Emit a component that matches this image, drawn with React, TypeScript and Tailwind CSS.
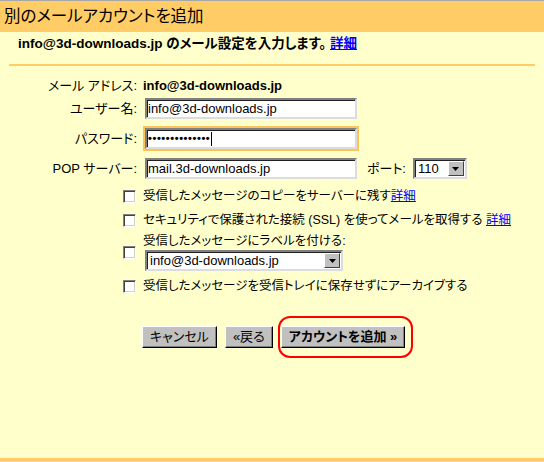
import React from 'react';

const font = "font-['Liberation_Sans','Noto_Sans_CJK_JP',sans-serif] [font-feature-settings:'palt']";

function Field({ children, className = '' }: { children: React.ReactNode; className?: string }) {
  return (
    <div
      className={`ml-[2px] w-[212px] h-[21px] bg-white border-2 border-t-[#808080] border-l-[#808080] border-b-[#dcdcdc] border-r-[#dcdcdc] shadow-[inset_1px_1px_0_#202020] flex items-center pl-[1px] text-[13px] text-black ${className}`}
    >
      {children}
    </div>
  );
}

function Select({ value, width }: { value: string; width: string }) {
  return (
    <div
      className={`${width} h-[21px] bg-white border-2 border-t-[#808080] border-l-[#808080] border-b-[#dcdcdc] border-r-[#dcdcdc] shadow-[inset_1px_1px_0_#202020] flex items-stretch text-[13px]`}
    >
      <div className="flex-1 flex items-center pl-[3px] pt-[1px]">{value}</div>
      <div className="w-[16px] my-[1px] mr-[1px] bg-[#c0c0c0] border border-t-white border-l-white border-b-[#404040] border-r-[#404040] flex items-center justify-center">
        <svg width="7" height="4" viewBox="0 0 7 4">
          <path d="M0 0h7L3.5 4z" fill="#000" />
        </svg>
      </div>
    </div>
  );
}

function Checkbox() {
  return (
    <span className="w-[13px] h-[13px] shrink-0 bg-white border border-t-[#808080] border-l-[#808080] border-b-white border-r-white shadow-[inset_1px_1px_0_#404040,inset_-1px_-1px_0_#d4d0c8]" />
  );
}

function Button({ children, bold = false }: { children: React.ReactNode; bold?: boolean }) {
  return (
    <div
      className={`h-[22px] bg-[#c0c0c0] border border-t-white border-l-white border-b-black border-r-black shadow-[inset_-1px_-1px_0_#808080] flex items-center px-[7px] text-[13px] text-black ${bold ? 'font-bold' : ''}`}
    >
      {children}
    </div>
  );
}

export default function App() {
  return (
    <div className={`w-[544px] h-[462px] bg-[#ffffcc] flex flex-col border-t border-[#a8a8a8] text-black ${font}`}>
      {/* Header */}
      <div className="h-[31px] shrink-0 bg-[#ffcc66] flex items-center px-[4px] text-[16.5px]">別のメールアカウントを追加</div>

      {/* Subtitle */}
      <div className="mx-[9px] h-[34px] border-b-2 border-[#ffcc66] pl-[9px] pt-[4px] text-[13.5px] font-bold leading-[16px]">
        info@3d-downloads.jp のメール設定を入力します。{' '}
        <a className="text-[#0000ff] underline">詳細</a>
      </div>

      {/* Form */}
      <div className="flex flex-col text-[13px]">
        <div className="mt-[9px] h-[21px] flex items-center">
          <div className="w-[137px] text-right">メール アドレス:</div>
          <div className="ml-[6px] font-bold">info@3d-downloads.jp</div>
        </div>
        <div className="mt-[2px] h-[21px] flex items-center">
          <div className="w-[137px] text-right">ユーザー名:</div>
          <div className="ml-[6px]">
            <Field>info@3d-downloads.jp</Field>
          </div>
        </div>
        <div className="mt-[9px] h-[21px] flex items-center">
          <div className="w-[137px] text-right">パスワード:</div>
          <div className="ml-[6px]">
            <Field className="outline-2 outline-[#fbc35c]">
              <span className="text-[11px] tracking-[0.6px] font-bold leading-none">••••••••••••••</span>
              <span className="ml-[1px] w-px h-[14px] bg-black" />
            </Field>
          </div>
        </div>
        <div className="mt-[9px] h-[21px] flex items-center">
          <div className="w-[137px] text-right">POP サーバー:</div>
          <div className="ml-[6px]">
            <Field>mail.3d-downloads.jp</Field>
          </div>
          <div className="ml-[10px]">ポート:</div>
          <div className="ml-[7px]">
            <Select value="110" width="w-[54px]" />
          </div>
        </div>

        {/* Options */}
        <div className="text-[12.5px] flex flex-col">
          <div className="mt-[9px] h-[16px] flex items-center pl-[123px] gap-[7px]">
            <Checkbox />
            <span>
              受信したメッセージのコピーをサーバーに残す<a className="text-[#0000ff] underline">詳細</a>
            </span>
          </div>
          <div className="mt-[8px] h-[16px] flex items-center pl-[123px] gap-[7px]">
            <Checkbox />
            <span>
              セキュリティで保護された接続 (SSL) を使ってメールを取得する{' '}
              <a className="text-[#0000ff] underline">詳細</a>
            </span>
          </div>
          <div className="mt-[5px] flex items-center pl-[123px] gap-[7px]">
            <Checkbox />
            <div className="flex flex-col">
              <div className="h-[16px] flex items-center">受信したメッセージにラベルを付ける:</div>
              <div className="mt-[1px] ml-[2px]">
                <Select value="info@3d-downloads.jp" width="w-[198px]" />
              </div>
            </div>
          </div>
          <div className="mt-[7px] h-[16px] flex items-center pl-[123px] gap-[7px]">
            <Checkbox />
            <span>受信したメッセージを受信トレイに保存せずにアーカイブする</span>
          </div>
        </div>

        {/* Buttons */}
        <div className="mt-[22px] flex items-center pl-[142px]">
          <Button>キャンセル</Button>
          <div className="ml-[8px]">
            <Button>«戻る</Button>
          </div>
          <div className="ml-[5px] border-2 border-[#ff0000] rounded-[12px] pl-[1px] pr-[6px] py-[8px]">
            <Button bold>アカウントを追加 »</Button>
          </div>
        </div>
      </div>

      <div className="flex-1" />
      <div className="h-[3px] bg-[#ffcc66]" />
      <div className="h-px bg-[#d8d8d8]" />
    </div>
  );
}
